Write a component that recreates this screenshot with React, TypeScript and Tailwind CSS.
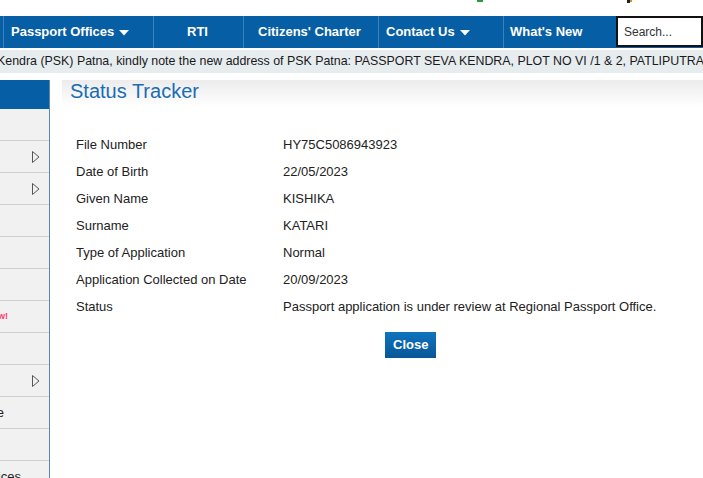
import React from 'react';

type Row = { label: string; value: string };

const details: Row[] = [
    { label: 'File Number', value: 'HY75C5086943923' },
    { label: 'Date of Birth', value: '22/05/2023' },
    { label: 'Given Name', value: 'KISHIKA' },
    { label: 'Surname', value: 'KATARI' },
    { label: 'Type of Application', value: 'Normal' },
    { label: 'Application Collected on Date', value: '20/09/2023' },
    { label: 'Status', value: 'Passport application is under review at Regional Passport Office.' },
];

const Caret = () => (
    <svg width="10" height="6" viewBox="0 0 10 6" className="ml-[5px] mt-[1px]">
        <polygon points="0,0 10,0 5,5.5" fill="#fff" />
    </svg>
);

const SideArrow = () => (
    <svg width="8" height="12" viewBox="0 0 8 12" className="mr-[9px]">
        <polygon points="0.5,0.5 7,6 0.5,11.5" fill="none" stroke="#555" strokeWidth="1" />
    </svg>
);

type NavItem = { label: string; w: string; pl: string; caret?: boolean };

const navItems: NavItem[] = [
    { label: 'Passport Offices', w: 'w-[149px]', pl: 'pl-[7px]', caret: true },
    { label: 'RTI', w: 'w-[89px]', pl: 'pl-[33px]' },
    { label: "Citizens' Charter", w: 'w-[134px]', pl: 'pl-[14px]' },
    { label: 'Contact Us', w: 'w-[124px]', pl: 'pl-[7px]', caret: true },
    { label: "What's New", w: 'w-[112px]', pl: 'pl-[6px]' },
];

type SideRow = { text?: React.ReactNode; arrow?: boolean };

const sideRows: SideRow[] = [
    {},
    { arrow: true },
    { arrow: true },
    {},
    {},
    {},
    { text: <span className="text-[9px] font-bold text-[#ff3a72] mr-[41px]">New!</span> },
    {},
    { arrow: true },
    { text: <span className="text-[13px] text-[#222] mr-[45px]">Passport Type Guide</span> },
    {},
    { text: <span className="text-[13px] text-[#222] mr-[28px]">Other Services</span> },
];

export default function App() {
    return (
        <div className="w-[703px] h-[478px] overflow-hidden bg-white font-['Liberation_Sans',Arial,sans-serif]">
            {/* logo strip, only the lower edge shows */}
            <div className="h-4 flex">
                <div className="ml-[477px] w-[6px] h-[2px] bg-[#2e9a3a]" />
                <div className="ml-[144px] w-[3px] h-[3px] bg-[#222]" />
                <div className="w-[2px] h-[2px] bg-[#e08a1e]" />
            </div>

            <nav className="h-8 flex bg-[#065ea5] text-white text-[13px] font-bold">
                <div className="w-[3px]" />
                {navItems.map((item) => (
                    <div key={item.label} className="flex">
                        <div className="w-px bg-[#3f81bb]" />
                        <div className={`${item.w} ${item.pl} flex items-center`}>
                            <span>{item.label}</span>
                            {item.caret && <Caret />}
                        </div>
                    </div>
                ))}
                <div className="flex-1 flex">
                    <input
                        placeholder="Search..."
                        className="w-full h-[31px] border-2 border-[#111] bg-white px-[6px] text-[12px] font-normal text-[#333] placeholder:text-[#333] outline-none"
                    />
                </div>
            </nav>

            <div className="mt-[2px] h-[23px] bg-[#e7ecef] flex items-center overflow-hidden whitespace-nowrap text-[12.4px] text-[#1a1a1a]">
                <span className="ml-[-3px]">
                    Kendra (PSK) Patna, kindly note the new address of PSK Patna: PASSPORT SEVA KENDRA, PLOT NO VI /1 &amp; 2, PATLIPUTRA INDUSTRIAL AREA, PATNA
                </span>
            </div>

            <div className="mt-[7px] flex">
                <aside className="w-[50px] h-[398px] shrink-0 bg-[#f1f1f1] border-r border-[#5a86b6] overflow-hidden">
                    <div className="h-[29px] bg-[#065ea5]" />
                    {sideRows.map((row, i) => (
                        <div
                            key={i}
                            className="h-8 border-b border-[#cfcfcf] flex items-center justify-end whitespace-nowrap"
                        >
                            {row.text}
                            {row.arrow && <SideArrow />}
                        </div>
                    ))}
                </aside>

                <main className="flex-1 ml-3">
                    <div className="h-[27px] pl-2 bg-gradient-to-b from-[#ececec] to-white">
                        <h1 className="text-[20px] leading-[23px] text-[#1a6cb4]">Status Tracker</h1>
                    </div>

                    <div className="mt-[24px] ml-[14px] text-[13px] text-[#222]">
                        {details.map((row) => (
                            <div key={row.label} className="h-[27px] flex items-center">
                                <div className="w-[207px]">{row.label}</div>
                                <div>{row.value}</div>
                            </div>
                        ))}
                    </div>

                    <div className="mt-[12px] pl-[323px]">
                        <button className="h-[26px] px-2 bg-gradient-to-b from-[#0f74be] to-[#085697] text-white text-[13px] font-bold">
                            Close
                        </button>
                    </div>
                </main>
            </div>
        </div>
    );
}
